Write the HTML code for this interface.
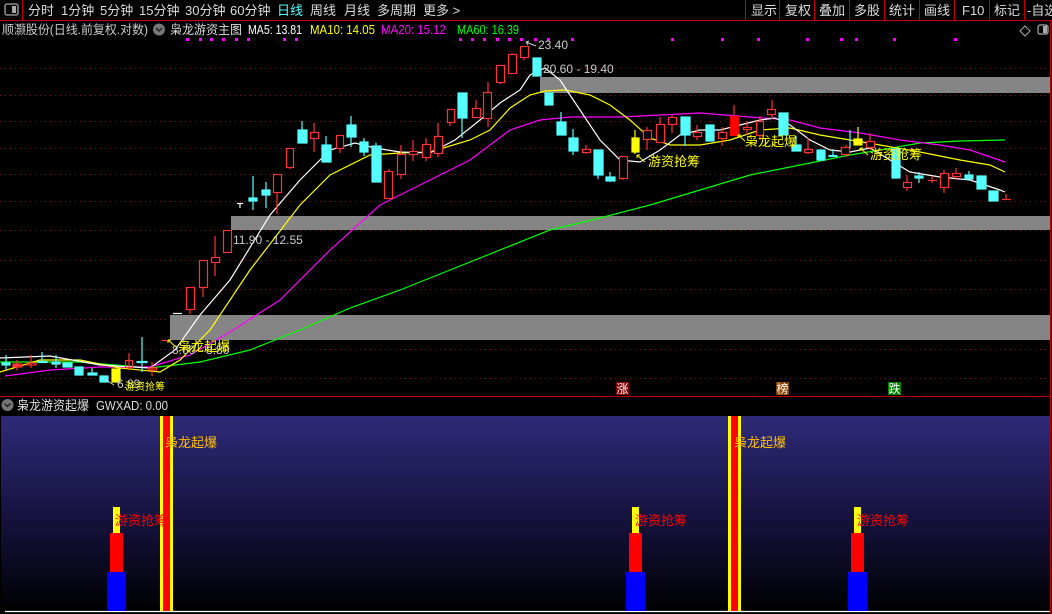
<!DOCTYPE html>
<html><head><meta charset="utf-8"><style>
html,body{margin:0;padding:0;background:#000;width:1052px;height:614px;overflow:hidden;font-family:"Liberation Sans","Noto Sans CJK SC",sans-serif;}
svg{display:block}
</style></head><body>
<svg width="1052" height="614" viewBox="0 0 1052 614" xmlns="http://www.w3.org/2000/svg" font-family="Liberation Sans, Noto Sans CJK SC, sans-serif">
<defs>
<linearGradient id="bg" x1="0" y1="0" x2="0" y2="1">
<stop offset="0" stop-color="#2f2a78"/><stop offset="0.5" stop-color="#161340"/><stop offset="1" stop-color="#000000"/>
</linearGradient>
</defs>
<rect width="1052" height="614" fill="#000"/>
<!-- toolbar -->
<line x1="0" y1="20.5" x2="1052" y2="20.5" stroke="#c00000"/>
<line x1="22.5" y1="0" x2="22.5" y2="20" stroke="#c00000"/>
<rect x="5" y="4" width="13" height="11" rx="2" fill="none" stroke="#aaa" stroke-width="1.3"/>
<rect x="12" y="6" width="4" height="7" fill="#aaa"/>
<g font-size="13" fill="#ddd">
<text x="28" y="15">分时</text><text x="61" y="15">1分钟</text><text x="100" y="15">5分钟</text><text x="139" y="15">15分钟</text>
<text x="185" y="15">30分钟</text><text x="230" y="15">60分钟</text><text x="277" y="15" fill="#5ff">日线</text>
<text x="310" y="15">周线</text><text x="344" y="15">月线</text><text x="377" y="15">多周期</text><text x="423" y="15">更多 &gt;</text>
<text x="751" y="15">显示</text><text x="785" y="15">复权</text><text x="819" y="15">叠加</text><text x="854" y="15">多股</text>
<text x="889" y="15">统计</text><text x="924" y="15">画线</text><text x="962" y="15">F10</text><text x="994" y="15">标记</text><text x="1027" y="15">-自选</text>
</g>
<g stroke="#c00000"><line x1="745.5" y1="0" x2="745.5" y2="20"/><line x1="779.5" y1="0" x2="779.5" y2="20"/><line x1="814.5" y1="0" x2="814.5" y2="20"/><line x1="849.5" y1="0" x2="849.5" y2="20"/><line x1="884.5" y1="0" x2="884.5" y2="20"/><line x1="919.5" y1="0" x2="919.5" y2="20"/><line x1="954.5" y1="0" x2="954.5" y2="20"/><line x1="989.5" y1="0" x2="989.5" y2="20"/><line x1="1024.5" y1="0" x2="1024.5" y2="20"/></g>
<line x1="1050.5" y1="20" x2="1050.5" y2="614" stroke="#c00000"/>
<!-- header -->
<g font-size="12.5">
<text x="2" y="34" fill="#ccc" textLength="146" lengthAdjust="spacingAndGlyphs">顺灏股份(日线.前复权.对数)</text>
<circle cx="159" cy="29.5" r="6" fill="#777"/><path d="M156 28l3 3 3-3" stroke="#222" stroke-width="1.5" fill="none"/>
<text x="170" y="34" fill="#ddd" textLength="72" lengthAdjust="spacingAndGlyphs">枭龙游资主图</text>
<text x="248" y="34" fill="#fff" textLength="54" lengthAdjust="spacingAndGlyphs">MA5: 13.81</text>
<text x="310" y="34" fill="#ff0" textLength="65" lengthAdjust="spacingAndGlyphs">MA10: 14.05</text>
<text x="381" y="34" fill="#f0f" textLength="65" lengthAdjust="spacingAndGlyphs">MA20: 15.12</text>
<text x="457" y="34" fill="#0f0" textLength="62" lengthAdjust="spacingAndGlyphs">MA60: 16.39</text>
</g>
<path d="M1025 26l5 5-5 5-5-5z" fill="none" stroke="#aaa"/>
<rect x="1038" y="25" width="10" height="9" rx="2" fill="none" stroke="#aaa" stroke-width="1.2"/><rect x="1043" y="26" width="4" height="7" fill="#aaa"/>
<!-- magenta dots -->
<g fill="#f0f">
<rect x="186" y="38" width="3" height="3"/><rect x="199" y="38" width="3" height="3"/><rect x="210" y="38" width="3" height="3"/><rect x="222" y="38" width="3" height="3"/><rect x="235" y="38" width="3" height="3"/><rect x="247" y="38" width="3" height="3"/><rect x="283" y="38" width="3" height="3"/><rect x="295" y="38" width="3" height="3"/>
<rect x="459" y="38" width="3" height="3"/><rect x="471" y="38" width="3" height="3"/><rect x="483" y="38" width="3" height="3"/><rect x="496" y="38" width="3" height="3"/><rect x="508" y="38" width="3" height="3"/><rect x="520" y="38" width="3" height="3"/>
<rect x="534" y="38" width="3" height="3"/><rect x="547" y="38" width="3" height="3"/><rect x="571" y="38" width="3" height="3"/><rect x="671" y="38" width="3" height="3"/><rect x="721" y="38" width="3" height="3"/><rect x="757" y="38" width="3" height="3"/><rect x="806" y="38" width="3" height="3"/><rect x="840" y="38" width="3" height="3"/><rect x="855" y="38" width="3" height="3"/><rect x="893" y="38" width="3" height="3"/><rect x="954" y="38" width="3" height="3"/>
</g>
<!-- grid -->
<g stroke="#8a1010" stroke-dasharray="1,4">
<line x1="0" y1="68.5" x2="1050" y2="68.5"/><line x1="0" y1="95.5" x2="1050" y2="95.5"/><line x1="0" y1="121.5" x2="1050" y2="121.5"/><line x1="0" y1="148.5" x2="1050" y2="148.5"/><line x1="0" y1="174.5" x2="1050" y2="174.5"/><line x1="0" y1="201.5" x2="1050" y2="201.5"/><line x1="0" y1="230.5" x2="1050" y2="230.5"/><line x1="0" y1="260.5" x2="1050" y2="260.5"/><line x1="0" y1="289.5" x2="1050" y2="289.5"/><line x1="0" y1="319.5" x2="1050" y2="319.5"/><line x1="0" y1="349.5" x2="1050" y2="349.5"/><line x1="0" y1="378.5" x2="1050" y2="378.5"/>
</g>
<!-- gray bars -->
<g fill="#858585">
<rect x="540" y="77" width="510" height="16"/>
<rect x="231" y="216" width="819" height="14"/>
<rect x="170" y="315" width="880" height="25"/>
</g>
<!-- MA lines -->
<g fill="none" stroke-width="1.2">
<polyline stroke="#0f0" points="0,362 80,362 150,368 200,362 250,350 300,330 350,308 400,290 450,270 500,250 550,230 600,218 650,205 700,190 750,175 800,165 850,155 880,150 920,143 960,141 1005,140"/>
<polyline stroke="#f0f" points="5,376 50,370 100,367 150,367 190,355 230,332 280,300 330,250 380,205 420,185 470,160 510,130 540,120 570,117 620,117 700,113 750,117 790,120 820,128 860,133 900,140 940,145 970,150 1005,162"/>
<polyline stroke="#ff0" points="0,372 40,360 80,360 120,368 160,372 180,360 210,330 250,270 300,205 330,175 370,155 400,153 430,152 470,140 490,130 510,108 530,95 545,91 565,90 590,95 610,105 630,120 650,138 670,145 700,145 730,140 760,130 790,128 820,135 850,140 880,145 920,152 960,160 990,165 1005,172"/>
<polyline stroke="#fff" points="0,358 50,356 100,365 150,368 175,350 200,315 230,280 270,215 300,180 330,150 355,143 375,148 400,152 430,153 455,140 480,120 500,103 520,90 530,75 545,68 560,80 580,110 600,140 620,160 640,162 660,150 680,135 700,130 720,130 740,125 760,120 775,118 790,125 810,140 830,150 850,152 870,148 890,160 910,172 940,177 970,180 1000,190 1005,192"/>
</g>
<!-- candles -->
<g stroke-width="1.2">
<g stroke="#ff3333" fill="none">
<line x1="17" y1="360" x2="17" y2="370"/><rect x="13" y="364" width="9" height="3" fill="#ff3333"/>
<line x1="31" y1="355" x2="31" y2="368"/><rect x="27" y="363" width="9" height="2"/>
<line x1="129" y1="353" x2="129" y2="370"/><rect x="125.5" y="360.5" width="7" height="7"/>
<line x1="152" y1="362" x2="152" y2="376"/><rect x="148.5" y="368" width="8" height="2"/>
<line x1="162" y1="340.5" x2="170" y2="340.5"/>
<line x1="190" y1="287" x2="190" y2="314"/><rect x="186.5" y="287.5" width="8" height="22" fill="#000"/>
<line x1="203" y1="287" x2="203" y2="297"/><rect x="199.5" y="260.5" width="8" height="27" fill="#000"/>
<line x1="215" y1="236" x2="215" y2="276"/><rect x="211.5" y="257.5" width="8" height="5" fill="#000"/>
<rect x="223.5" y="230.5" width="8" height="22"/>
<line x1="277" y1="192" x2="277" y2="214"/><rect x="273.5" y="174.5" width="8" height="18" fill="#000"/>
<line x1="290" y1="167" x2="290" y2="169"/><rect x="286.5" y="148.5" width="7" height="19" fill="#000"/>
<line x1="314" y1="123" x2="314" y2="152"/><rect x="310.5" y="132.5" width="8" height="6" fill="#000"/>
<line x1="340" y1="148" x2="340" y2="153"/><rect x="336.5" y="135.5" width="7" height="13" fill="#000"/>
<line x1="389" y1="169" x2="389" y2="172"/><rect x="384.5" y="171.5" width="8" height="27" fill="#000"/>
<line x1="401" y1="145" x2="401" y2="179"/><rect x="397.5" y="154.5" width="8" height="20" fill="#000"/>
<line x1="413" y1="140" x2="413" y2="161"/><rect x="409.5" y="151.5" width="8" height="3" fill="#000"/>
<line x1="426" y1="138" x2="426" y2="161"/><rect x="422.5" y="144.5" width="8" height="13" fill="#000"/>
<line x1="438" y1="123" x2="438" y2="157"/><rect x="434.5" y="136.5" width="8" height="17" fill="#000"/>
<line x1="450" y1="122" x2="450" y2="126"/><rect x="447.5" y="109.5" width="7" height="13" fill="#000"/>
<line x1="476" y1="100" x2="476" y2="108"/><rect x="472.5" y="108.5" width="8" height="9" fill="#000"/>
<line x1="488" y1="82" x2="488" y2="127"/><rect x="483.5" y="92.5" width="8" height="26" fill="#000"/>
<line x1="500" y1="82" x2="500" y2="84"/><rect x="496.5" y="65.5" width="8" height="17" fill="#000"/>
<line x1="512" y1="53" x2="512" y2="54"/><rect x="508.5" y="54.5" width="8" height="19" fill="#000"/>
<line x1="524" y1="57" x2="524" y2="60"/><rect x="520.5" y="46.5" width="8" height="11" fill="#000"/>
<line x1="586" y1="145" x2="586" y2="154"/><rect x="582.5" y="149.5" width="8" height="3" fill="#000"/>
<line x1="623" y1="178" x2="623" y2="180"/><rect x="619.5" y="156.5" width="8" height="22" fill="#000"/>
<line x1="647" y1="127" x2="647" y2="150"/><rect x="643.5" y="130.5" width="8" height="9" fill="#000"/>
<line x1="660" y1="117" x2="660" y2="142"/><rect x="656.5" y="124.5" width="8" height="18" fill="#000"/>
<line x1="672" y1="115" x2="672" y2="133"/><rect x="668.5" y="117.5" width="8" height="7" fill="#000"/>
<line x1="697" y1="125" x2="697" y2="140"/><rect x="693.5" y="132.5" width="8" height="4" fill="#000"/>
<line x1="722" y1="127" x2="722" y2="146"/><rect x="718.5" y="132.5" width="8" height="6" fill="#000"/>
<line x1="734" y1="105" x2="734" y2="116"/><rect x="730.5" y="116.5" width="8" height="19" fill="#ff0000" stroke="#ff0000"/>
<line x1="747" y1="121" x2="747" y2="135"/><rect x="743.5" y="127.5" width="8" height="2" fill="#000"/>
<line x1="760" y1="116" x2="760" y2="140"/><rect x="756.5" y="121.5" width="7" height="14" fill="#000"/>
<line x1="772" y1="100" x2="772" y2="119"/><rect x="767.5" y="109.5" width="8" height="5" fill="#000"/>
<line x1="808" y1="138" x2="808" y2="154"/><rect x="804.5" y="149.5" width="8" height="3" fill="#000"/>
<line x1="846" y1="145" x2="846" y2="157"/><rect x="841.5" y="147.5" width="8" height="7" fill="#000"/>
<line x1="870" y1="133" x2="870" y2="150"/><rect x="866.5" y="141.5" width="8" height="6" fill="#000"/>
<line x1="907" y1="175" x2="907" y2="191"/><rect x="903.5" y="182.5" width="8" height="5" fill="#000"/>
<line x1="932" y1="176" x2="932" y2="183"/><line x1="928" y1="180.5" x2="937" y2="180.5"/>
<line x1="944" y1="170" x2="944" y2="193"/><rect x="940.5" y="173.5" width="8" height="14" fill="#000"/>
<line x1="956" y1="168" x2="956" y2="180"/><rect x="952.5" y="173.5" width="8" height="3" fill="#000"/>
<line x1="1006" y1="194" x2="1006" y2="200"/><line x1="1002" y1="199.5" x2="1011" y2="199.5"/>
</g>
<g stroke="#5ff" fill="#5ff">
<line x1="6" y1="355" x2="6" y2="370"/><rect x="2" y="363" width="8" height="2"/>
<line x1="42" y1="352" x2="42" y2="362"/><rect x="38" y="361.5" width="9" height="1"/>
<line x1="56" y1="355" x2="56" y2="368"/><rect x="52" y="362" width="8" height="2"/>
<rect x="63" y="363" width="9" height="4"/><rect x="75" y="367" width="8" height="8"/>
<line x1="92" y1="368" x2="92" y2="375"/><rect x="88" y="373" width="9" height="2"/>
<rect x="100" y="376" width="8" height="6"/>
<line x1="142" y1="337" x2="142" y2="372"/><rect x="137" y="361.5" width="10" height="1"/>
<line x1="253" y1="176" x2="253" y2="210"/><rect x="249" y="198" width="8" height="3"/>
<line x1="266" y1="182" x2="266" y2="208"/><rect x="262" y="190" width="8" height="5"/>
<line x1="302" y1="121" x2="302" y2="130"/><rect x="298" y="130" width="9" height="13"/>
<line x1="326" y1="136" x2="326" y2="145"/><rect x="322" y="145" width="9" height="17"/>
<line x1="351" y1="116" x2="351" y2="147"/><rect x="347" y="125" width="9" height="12"/>
<line x1="364" y1="138" x2="364" y2="156"/><rect x="360" y="142" width="8" height="10"/>
<line x1="376" y1="143" x2="376" y2="146"/><rect x="372" y="146" width="9" height="36"/>
<line x1="462" y1="118" x2="462" y2="138"/><rect x="458" y="93" width="9" height="25"/>
<rect x="533" y="58" width="8" height="18"/>
<rect x="545" y="93" width="8" height="12"/>
<line x1="561" y1="112" x2="561" y2="122"/><rect x="557" y="122" width="9" height="13"/>
<line x1="573" y1="129" x2="573" y2="155"/><rect x="569" y="138" width="9" height="13"/>
<line x1="598" y1="175" x2="598" y2="179"/><rect x="594" y="150" width="9" height="25"/>
<line x1="610" y1="172" x2="610" y2="182"/><rect x="606" y="177" width="9" height="4"/>
<line x1="685" y1="135" x2="685" y2="146"/><rect x="681" y="117" width="9" height="18"/>
<rect x="706" y="125" width="8" height="16"/>
<rect x="779" y="113" width="9" height="22"/>
<line x1="796" y1="136" x2="796" y2="145"/><rect x="792" y="145" width="9" height="6"/>
<rect x="817" y="150" width="8" height="10"/>
<line x1="833" y1="149" x2="833" y2="157"/><rect x="829" y="155.5" width="8" height="1"/>
<line x1="850" y1="130" x2="850" y2="148"/>
<rect x="892" y="149" width="8" height="29"/>
<line x1="919" y1="172" x2="919" y2="183"/><rect x="915" y="176" width="8" height="2"/>
<line x1="969" y1="171" x2="969" y2="179"/><rect x="965" y="175" width="8" height="4"/>
<rect x="977" y="176" width="9" height="13"/>
<rect x="989" y="191" width="9" height="10"/>
</g>
<g stroke="#ff0" fill="#ff0">
<rect x="112" y="369" width="8" height="13"/>
<line x1="635" y1="130" x2="635" y2="154"/><rect x="632" y="138" width="7" height="14"/>
<line x1="858" y1="127" x2="858" y2="139"/><rect x="854" y="139" width="8" height="6"/>
</g>
<g stroke="#fff"><line x1="173" y1="313.5" x2="182" y2="313.5"/><line x1="237" y1="203.5" x2="243" y2="203.5"/><line x1="240" y1="203" x2="240" y2="208"/></g>
</g>
<!-- price labels -->
<g font-size="12" fill="#ccc">
<text x="538" y="49">23.40</text><path d="M536 46l-10-4m0 0l3 -1m-3 1l2 3" stroke="#ccc" fill="none"/>
<text x="543" y="73">20.60 - 19.40</text>
<text x="233" y="244">11.90 - 12.55</text>
<text x="172" y="354">8.60 - 8.80</text>
<text x="117" y="388">6.89</text><path d="M114 385l-8-5" stroke="#ccc"/>
</g>
<g font-size="13" fill="#ff0">
<text x="178" y="351">枭龙起爆</text><text x="125" y="390" font-size="10">游资抢筹</text>
<text x="648" y="166">游资抢筹</text><text x="745" y="146">枭龙起爆</text><text x="870" y="159">游资抢筹</text>
</g>
<g stroke="#ff0"><path d="M637 155l8 7M637 155v3M637 155h3"/><path d="M738 135l7 6M738 135v3M738 135h3"/><path d="M860 148l8 7M860 148v3M860 148h3"/><path d="M168 340l8 7M168 340v3M168 340h3"/></g>
<!-- tags -->
<rect x="616" y="382" width="13" height="13" fill="#800000"/><text x="616.5" y="393" font-size="12" fill="#fff">涨</text>
<rect x="776" y="382" width="13" height="13" fill="#8a4500"/><text x="776.5" y="393" font-size="12" fill="#fff">榜</text>
<rect x="888" y="382" width="13" height="13" fill="#008000"/><text x="888.5" y="393" font-size="12" fill="#fff">跌</text>
<line x1="0" y1="396.5" x2="1050" y2="396.5" stroke="#c00000"/>
<!-- lower panel -->
<circle cx="7.5" cy="405" r="6" fill="#777"/><path d="M4.5 403.5l3 3 3-3" stroke="#222" stroke-width="1.5" fill="none"/>
<text x="17" y="410" font-size="13" fill="#ddd" textLength="72" lengthAdjust="spacingAndGlyphs">枭龙游资起爆</text>
<text x="96" y="410" font-size="12.5" fill="#ddd" textLength="72" lengthAdjust="spacingAndGlyphs">GWXAD: 0.00</text>
<rect x="1" y="416" width="1049" height="198" fill="url(#bg)"/>
<line x1="5" y1="611.5" x2="1050" y2="611.5" stroke="#fff" stroke-width="1.2"/>
<g>
<rect x="160" y="416" width="13" height="195" fill="#ff0"/><rect x="163" y="416" width="7" height="195" fill="#f00"/>
<rect x="728" y="416" width="13" height="195" fill="#ff0"/><rect x="731" y="416" width="7" height="195" fill="#f00"/>
<rect x="113" y="507" width="7" height="27" fill="#ff0"/><rect x="110" y="533" width="13" height="40" fill="#f00"/><rect x="107" y="572" width="19" height="39" fill="#00f"/>
<rect x="632" y="507" width="7" height="27" fill="#ff0"/><rect x="629" y="533" width="13" height="40" fill="#f00"/><rect x="626" y="572" width="19" height="39" fill="#00f"/>
<rect x="854" y="507" width="7" height="27" fill="#ff0"/><rect x="851" y="533" width="13" height="40" fill="#f00"/><rect x="848" y="572" width="19" height="39" fill="#00f"/>
</g>
<g font-size="13">
<text x="165" y="447" fill="#ffc000">枭龙起爆</text><text x="734" y="447" fill="#ffc000">枭龙起爆</text>
<text x="115" y="525" fill="#f00">游资抢筹</text><text x="635" y="525" fill="#f00">游资抢筹</text><text x="857" y="525" fill="#f00">游资抢筹</text>
</g>
</svg>
</body></html>
